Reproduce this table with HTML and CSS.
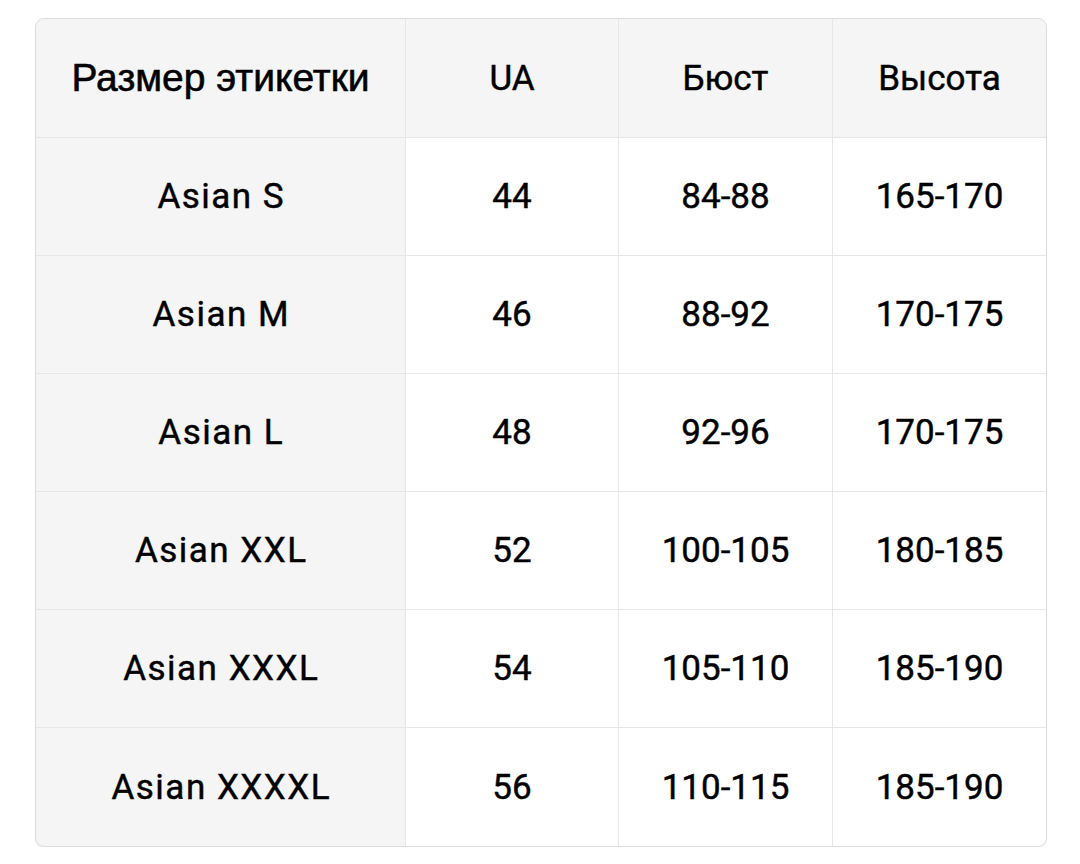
FILE: index.html
```html
<!DOCTYPE html>
<html>
<head>
<meta charset="utf-8">
<link rel="stylesheet" href="styles.css">
</head>
<body>
<div class="size-table">
  <div class="cell head first">Размер этикетки</div>
  <div class="cell head">UA</div>
  <div class="cell head">Бюст</div>
  <div class="cell head">Высота</div>

  <div class="cell label">Asian S</div>
  <div class="cell">44</div>
  <div class="cell">84-88</div>
  <div class="cell">165-170</div>

  <div class="cell label">Asian M</div>
  <div class="cell">46</div>
  <div class="cell">88-92</div>
  <div class="cell">170-175</div>

  <div class="cell label">Asian L</div>
  <div class="cell">48</div>
  <div class="cell">92-96</div>
  <div class="cell">170-175</div>

  <div class="cell label">Asian XXL</div>
  <div class="cell">52</div>
  <div class="cell">100-105</div>
  <div class="cell">180-185</div>

  <div class="cell label">Asian XXXL</div>
  <div class="cell">54</div>
  <div class="cell">105-110</div>
  <div class="cell">185-190</div>

  <div class="cell label">Asian XXXXL</div>
  <div class="cell">56</div>
  <div class="cell">110-115</div>
  <div class="cell">185-190</div>
</div>
</body>
</html>
```

FILE: styles.css
```css
html, body {
  margin: 0;
  padding: 0;
  background: #ffffff;
}

body {
  padding: 18px 0 0 35px;
  font-family: Roboto, "Liberation Sans", sans-serif;
}

.size-table {
  width: 1012px;
  box-sizing: border-box;
  display: grid;
  grid-template-columns: 369px 212px 213px 213px;
  grid-template-rows: 118px repeat(5, 117px) 118px;
  gap: 1px;
  border: 1px solid #dcdcdc;
  border-radius: 9px;
  overflow: hidden;
  background: #e6e6e6;
  box-shadow: 0 1px 1px rgba(0, 0, 0, 0.06);
}

.cell {
  background: #ffffff;
  display: flex;
  align-items: center;
  justify-content: center;
  font-size: 35px;
  font-weight: 400;
  color: #000000;
  -webkit-text-stroke: 0.45px #000000;
}

.cell.head,
.cell.label {
  background: #f5f5f5;
}

.cell.label {
  letter-spacing: 1.5px;
  padding-left: 1.5px;
}

.cell.head.first {
  font-family: "Liberation Sans", Arial, sans-serif;
  font-size: 39px;
  padding-bottom: 1px;
  -webkit-text-stroke: 0.6px #000000;
}
```
